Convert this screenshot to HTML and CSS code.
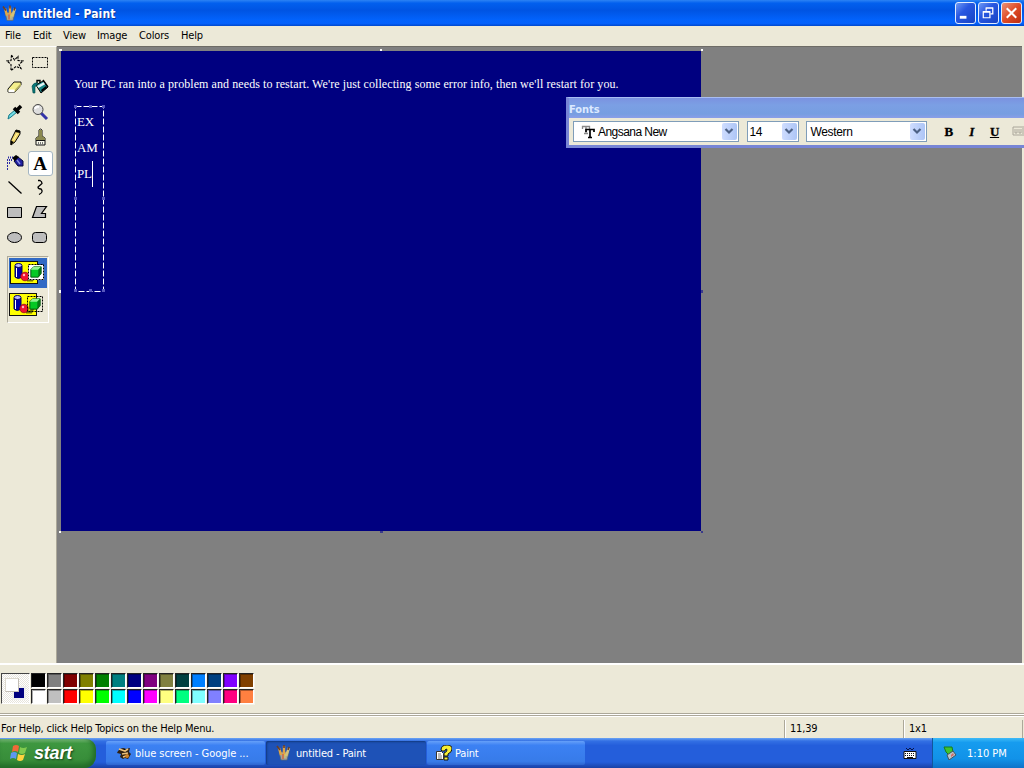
FILE: index.html
```html
<!DOCTYPE html>
<html lang="en">
<head>
<meta charset="utf-8">
<title>untitled - Paint</title>
<link rel="stylesheet" href="styles.css">
</head>
<body>
<svg width="0" height="0" class="defs" aria-hidden="true">
  <symbol id="cup" viewBox="0 0 16 16">
    <path d="M3 7h10l-2 8H5z" fill="#a4a49b" stroke="#5c6970" stroke-width=".7"/>
    <path d="M5 10L3 3M8 10V1" stroke="#e2a545" stroke-width="2.400"/>
    <path d="M10 11l3-8" stroke="#d4c27b" stroke-width="2.600"/>
    <path d="M1 1l3 4M8 0v3M13 2l-1 3" stroke="#6b3f28" stroke-width="1.600"/>
    <path d="M7 9v5" stroke="#d56a3c" stroke-width="1.500"/><path d="M9 9v4" stroke="#dfd05b"/>
  </symbol>
  <symbol id="chev" viewBox="0 0 14 16"><path d="M3.500 6l3.500 3.500L10.500 6" fill="none" stroke="#4d6185" stroke-width="2.200"/></symbol>
  <symbol id="shapes" viewBox="0 0 36 25">
    <rect x=".5" y="1.500" width="27" height="22" fill="#ffff00" stroke="#111"/>
    <path d="M5 6v11q3 3 7 0V6z" fill="#0000a8" stroke="#000060"/><ellipse cx="8.500" cy="5.500" rx="3.500" ry="2" fill="#b9b9ff" stroke="#000060"/><path d="M6.500 8v9" stroke="#fff"/>
    <path d="M17 20h5l2-4" stroke="#777700" stroke-width="3" fill="none"/>
    <circle cx="15" cy="16.500" r="4.300" fill="#f01430" stroke="#850020" stroke-width=".7"/><circle cx="14" cy="15" r="1.200" fill="#ffb8c0"/>
  </symbol>
  <symbol id="cube" viewBox="0 0 16 16"><path d="M3 6l3-3h8v7l-3 4H3z" fill="#04c924" stroke="#064d10"/><path d="M3 6l3-3h8l-3 3z" fill="#92f192"/><path d="M11 6l3-3v7l-3 4z" fill="#067814"/></symbol>
</svg>
<div class="screen">
  <header class="title">
    <svg class="cup"><use href="#cup"/></svg><span class="title-text">untitled - Paint</span>
    <div class="controls">
      <span class="ctl"><svg viewBox="0 0 20 21"><path d="M4 15h7" stroke="#fff" stroke-width="3"/></svg></span>
      <span class="ctl"><svg viewBox="0 0 20 21"><path d="M7.500 8V5.500h7v6H12M7 5h8" fill="none" stroke="#fff" stroke-width="1.300"/><path d="M4.500 9.500h7v6h-7zM4 9h8" fill="none" stroke="#fff" stroke-width="1.300"/></svg></span>
      <span class="ctl close"><svg viewBox="0 0 20 21"><path d="M5 5.500l10 10M15 5.500l-10 10" stroke="#fff" stroke-width="2.200"/></svg></span>
    </div>
  </header>
  <nav class="menu"><span>File</span><span>Edit</span><span>View</span><span>Image</span><span>Colors</span><span>Help</span></nav>
  <main class="main">
    <aside class="side">
      <div class="tools">
        <i><svg viewBox="0 0 18 18"><path d="M5.500 2l3 5 3.500-3.500 0 4 5 0.500-4 3.500 2 4-5-2-5 4 0-6-4-3.500 4-.5z" fill="none" stroke="#000" stroke-width="1.100" stroke-dasharray="2.500 1"/></svg></i>
        <i><svg viewBox="0 0 18 18"><path d="M1.500 4.500h15v10h-15z" fill="none" stroke="#000" stroke-dasharray="2 1"/></svg></i>
        <i><svg viewBox="0 0 18 18"><path d="M2 11L8 4h7v3l-6 7H2z" fill="#f4f08c" stroke="#111"/><path d="M2.500 11.500h6v2.500h-6z" fill="#fff"/><path d="M9 11.500l6-6.500v2.500L9 14z" fill="#b4b060"/></svg></i>
        <i><svg viewBox="0 0 18 18"><path d="M5 7l7-4 5 6-7 6z" fill="#178484" stroke="#000"/><path d="M6 8l7-4 1.500 2-7 4z" fill="#e3f4f4"/><path d="M6 5V2.500h3V5M12 2l5 7" stroke="#000" fill="none" stroke-width="1.400"/><path d="M1 8q2-4 6-3L4 9v6H2z" fill="#087878" stroke="#054848" stroke-width=".6"/><path d="M10 12l5-4 1 2-5 4z"/></svg></i>
        <i><svg viewBox="0 0 18 18"><path d="M2 16l1-4 6-5 2 2-6 5z" fill="#72dbe3" stroke="#147b8b"/><path d="M8 5l5 5M11 7l4-4" stroke="#000" stroke-width="3.500"/></svg></i>
        <i><svg viewBox="0 0 18 18"><path d="M10 10l6 6" stroke="#3434a8" stroke-width="3"/><circle cx="7" cy="6.500" r="5" fill="#ddd" stroke="#444"/><path d="M4 6q1-3 4-2" stroke="#fff" stroke-width="2" fill="none"/></svg></i>
        <i><svg viewBox="0 0 18 18"><path d="M5 12l5-10 4 1v3l-5 8-4 3z" fill="#f0d468" stroke="#000"/><path d="M4.500 12.500v4.500l3.500-3zM10 2l4 1v2l-5-1z"/><path d="M7.500 12l4-7" stroke="#fff9a8"/></svg></i>
        <i><svg viewBox="0 0 18 18"><path d="M8 8V2q1.500-2 3 0v6l3 2v7H5v-7z" fill="#f7f7e9" stroke="#111"/><path d="M8 8V2h3v6l3 2v2H5v-2z" fill="#8b8950"/><path d="M5 12.500h9" stroke="#111"/><path d="M7.500 14v3M9.500 14v3M11.500 14v3" stroke="#777"/></svg></i>
        <i><svg viewBox="0 0 18 18"><path d="M8 8l4-4 5 4v5l-5 0z" fill="#1f1fa0" stroke="#060639"/><path d="M6 5l4-3 3 2-4 4z"/><path d="M2 4.500h5M1 7h5M1 10h3M1 13h2M1 16h1" stroke="#2929a5" stroke-width="2" stroke-dasharray="1 1"/><path d="M11 7l3 4" stroke="#8b90e2" stroke-width="1.400"/></svg></i>
        <i class="selected"><b>A</b></i>
        <i><svg viewBox="0 0 18 18"><path d="M2.500 3.500l13 12" stroke="#000" stroke-width="1.300"/></svg></i>
        <i><svg viewBox="0 0 18 18"><path d="M7 2.500h2q2 1 2 3L7 9q0 2 3 2 3 3-2 5.500" fill="none" stroke="#000" stroke-width="1.300"/></svg></i>
        <i><svg viewBox="0 0 18 18"><path d="M1.500 4.500h14v10h-14z" fill="#bdbdbd" stroke="#000"/></svg></i>
        <i><svg viewBox="0 0 18 18"><path d="M5.500 3.500h10l-5 7h4v4h-13z" fill="#bdbdbd" stroke="#000" stroke-width="1.200"/></svg></i>
        <i><svg viewBox="0 0 18 18"><ellipse cx="8.500" cy="9.500" rx="7" ry="5" fill="#bdbdbd" stroke="#000"/></svg></i>
        <i><svg viewBox="0 0 18 18"><rect x="1.500" y="4.500" width="14" height="10" rx="3" fill="#bdbdbd" stroke="#000"/></svg></i>
      </div>
      <div class="modes">
        <div class="mode on"><svg viewBox="0 0 36 25"><use href="#shapes" width="36" height="25"/><path d="M18 5h16v15H18z" fill="#fff"/><path d="M18.500 4.500h15v15h-15z" fill="none" stroke="#000" stroke-dasharray="2 1"/><use href="#cube" x="18" y="4" width="15" height="15"/></svg></div>
        <div class="mode"><svg viewBox="0 0 36 25"><use href="#shapes" width="36" height="25"/><path d="M18.500 4.500h15v15h-15z" fill="none" stroke="#000" stroke-dasharray="2 1"/><use href="#cube" x="18" y="4" width="15" height="15"/></svg></div>
      </div>
    </aside>
    <section class="work">
      <div class="canvas">
        <p class="message">Your PC ran into a problem and needs to restart. We're just collecting some error info, then we'll restart for you.</p>
        <div class="textbox">
          <svg class="marquee" viewBox="0 0 31 187"><path d="M1.500 1.500h28v185h-28z" fill="none" stroke="#fff" stroke-dasharray="6 2"/><path d="M0 0h3v3H0zM15 0h3v3h-3zM28 0h3v3h-3zM0 92h3v3H0zM28 92h3v3h-3zM0 184h3v3H0zM15 184h3v3h-3zM28 184h3v3h-3z" fill="#5555bd"/></svg>
          <div>EX</div><div>AM</div><div>PL<span class="caret"></span></div>
        </div>
        <svg class="handles" viewBox="0 0 644 484"><path d="M0 0h3v2H0zM321 0h2v2h-2zM642 0h2v2h-2zM0 241h2v3H0zM0 482h2v2H0z" fill="#fff"/><path d="M642 241h2v3h-2zM321 482h3v2h-3zM642 482h2v2h-2z" fill="#3a3a8b"/></svg>
      </div>
      <div class="fonts">
        <div class="fonts-title">Fonts</div>
        <div class="fonts-body">
          <div class="combo face"><svg class="tt" viewBox="0 0 14 14"><path d="M1.500 4V1.500h7V4M5 1v7M3 8.500h4" fill="none" stroke="#888" stroke-width="1.300"/><path d="M5 7V4.500h8V7M9 4v8M7 12.500h4" fill="none" stroke="#000" stroke-width="1.700"/></svg><span>Angsana New</span><em><svg><use href="#chev"/></svg></em></div>
          <div class="combo size"><span>14</span><em><svg><use href="#chev"/></svg></em></div>
          <div class="combo script"><span>Western</span><em><svg><use href="#chev"/></svg></em></div>
          <b class="fmt">B</b><b class="fmt it">I</b><b class="fmt un">U</b>
          <svg class="vert" viewBox="0 0 12 11"><path d="M12 1H1v8h11M3 3v4h2V3M7 3v4h2V3M11 2v6" fill="none" stroke="#aaa69a"/></svg>
        </div>
      </div>
    </section>
  </main>
  <section class="palette">
    <div class="current"><span class="back"></span><span class="fore"></span></div>
    <div class="swatches">
      <i class="c1"></i><i class="c2"></i><i class="c3"></i><i class="c4"></i><i class="c5"></i><i class="c6"></i><i class="c7"></i><i class="c8"></i><i class="c9"></i><i class="c10"></i><i class="c11"></i><i class="c12"></i><i class="c13"></i><i class="c14"></i>
      <i class="d1"></i><i class="d2"></i><i class="d3"></i><i class="d4"></i><i class="d5"></i><i class="d6"></i><i class="d7"></i><i class="d8"></i><i class="d9"></i><i class="d10"></i><i class="d11"></i><i class="d12"></i><i class="d13"></i><i class="d14"></i>
    </div>
  </section>
  <footer class="status"><span class="help">For Help, click Help Topics on the Help Menu.</span><span class="pos">11,39</span><span class="dim">1x1</span></footer>
  <div class="taskbar">
    <div class="start"><svg viewBox="0 0 20 20"><path d="M4 3q3-2 6 0L9 9q-3-2-6 0z" fill="#f16938"/><path d="M11 4q3 2 7 0l-2 6q-3 2-6 0z" fill="#81ca4e"/><path d="M2 10q3-2 6 0l-1 6q-3-2-6 0z" fill="#5d98f1"/><path d="M9 11q4 2 7 0l-2 6q-3 2-6 0z" fill="#ffd33e"/></svg><span>start</span></div>
    <div class="task t1"><svg viewBox="0 0 16 16"><path d="M2 6q4-5 8-2l4-1-1 4 2 2-3 5-3-1-2 1-3-2 1-3-4-1z" fill="#302111"/><path d="M3 4l6 2 3-2M6 9l6-1M7 12l3-1" stroke="#edc078" stroke-width="1.700"/><circle cx="11" cy="11" r="2" fill="#cf842b"/></svg><span>blue screen - Google ...</span></div>
    <div class="task t2 active"><svg><use href="#cup"/></svg><span>untitled - Paint</span></div>
    <div class="task t3"><svg viewBox="0 0 16 16"><path d="M5 5q0-5 6-5 5 0 5 4 0 3-4 5v2H8V8q3-1 3-3T9 5v1H6zM8 12h4v3H8z" fill="#f8ef32" stroke="#111"/><path d="M.5 6.500h5l2 2v6h-7z" fill="#fff" stroke="#333"/><path d="M2 9h3M2 11h4M2 13h4" stroke="#777"/></svg><span>Paint</span></div>
    <svg class="keyboard" viewBox="0 0 14 12"><path d="M3 1l2 2 2-2 2 2 2-2" fill="none" stroke="#071447"/><path d="M1 4.500h12v7H1z" fill="#fff" stroke="#111"/><path d="M2 6.500h10M2 8.500h10" stroke="#111" stroke-dasharray="1 1"/><path d="M4 10.500h6" stroke="#111"/></svg>
    <div class="tray"><svg viewBox="0 0 14 14"><path d="M1 1h8l1 5-4 3-3-3z" fill="#3fc42e" stroke="#177b22"/><path d="M4 9l6-4 3 4-7 5z" fill="#b9c6cb" stroke="#44545e"/><path d="M8 9l2-2 1 2-3 2z" fill="#d46967"/></svg><span>1:10 PM</span></div>
  </div>
</div>
</body>
</html>
```

FILE: styles.css
```css
* { box-sizing: border-box; }
body { margin: 0; font: 11px/14px "DejaVu Sans Condensed", "DejaVu Sans", sans-serif; font-stretch: condensed; letter-spacing: -.2px; color: #000; }
svg { display: block; flex: none; }
i { font-style: normal; }
.defs { display: none; }
.screen { width: 1024px; height: 768px; display: flex; flex-direction: column; overflow: hidden; background: #ece9d8; white-space: nowrap; }
.title { height: 26px; flex: none; display: flex; align-items: center; padding: 0 2px; background: linear-gradient(#2c83f4, #0260ee 12%, #0054e3 40%, #0262fb 75%, #0461fc 90%, #0048cc); color: #fff; }
.cup { width: 16px; height: 17px; }
.title-text { margin: 1px 0 0 4px; font: bold 12px/18px "DejaVu Sans Condensed", sans-serif; letter-spacing: .12px; text-shadow: 1px 1px #103a98; }
.controls { margin-left: auto; display: flex; gap: 2px; }
.ctl { width: 21px; height: 22px; border: 1px solid #e2edff; border-radius: 3px; background: linear-gradient(135deg, #6f9af5, #2857e1 40%, #1743c3); }
.ctl svg { width: 19px; height: 20px; }
.close { background: linear-gradient(135deg, #ed9277, #df4c27 50%, #bc2d10); }
.menu { height: 20px; flex: none; display: grid; grid-template-columns: 28px 30px 34px 42px 42px 40px; padding: 2px 0 0 5px; line-height: 15px; letter-spacing: -.15px; }
.main { height: 618px; flex: none; display: flex; }
.side { width: 57px; flex: none; padding: 3px 0 0 2px; border-top: 1px solid #fff; border-right: 1px solid #aca899; }
.tools { display: grid; grid-template-columns: 25px 25px; grid-auto-rows: 25px; }
.tools i { display: flex; align-items: center; justify-content: center; }
.tools svg { width: 18px; height: 18px; margin-top: -1px; }
.tools .selected { background: #fff; border: 1px solid #a3b5c2; border-radius: 3px; margin: 1px -1px -1px 1px; }
.selected b { font: bold 19px/22px "Liberation Serif", serif; letter-spacing: 0; margin-left: -1px; }
.modes { width: 42px; height: 67px; margin: 6px 0 0 5px; padding: 1px; border: 1px solid; border-color: #aca899 #fff #fff #aca899; }
.mode { height: 31px; padding: 4px 0 0 0; }
.mode.on { height: 30px; padding: 2px 0 0 1px; background: #316ac5; }
.mode svg { width: 36px; height: 25px; }
.work { position: relative; width: 965px; height: 617px; padding: 4px 0 0 4px; background: #808080; border-top: 1px solid #6e6c66; }
.canvas { position: relative; width: 640px; height: 480px; background: #000080; color: #fff; padding: 26px 0 0 13px; font: 12px/14px "Liberation Serif", serif; letter-spacing: .08px; }
.message { margin: 0; }
.handles { position: absolute; left: -2px; top: -2px; width: 644px; height: 484px; }
.textbox { position: relative; width: 31px; height: 187px; margin-top: 14px; padding: 4px 0 0 3px; line-height: 26px; letter-spacing: -.2px; font-size: 13px; }
.marquee { position: absolute; left: 0; top: 0; width: 31px; height: 187px; }
.caret { display: inline-block; vertical-align: middle; width: 1px; height: 26px; background: #fff; margin: -3px 0 0 0; }
.textbox > div { height: 26px; }
.fonts { position: absolute; left: 509px; top: 50px; width: 458px; height: 51px; border: 3px solid #7785d5; border-top: 1px solid #a8bdf2; border-right: 0; background: #ece9d8; }
.fonts-title { height: 20px; padding-top: 4px; background: linear-gradient(#7b92e0, #7b9fe4 35%, #779ee1 80%, #8a9ee8); color: #dce9ff; font: bold 11px/15px "DejaVu Sans Condensed", sans-serif; letter-spacing: -.05px; }
.fonts-body { height: 27px; display: flex; align-items: center; padding-left: 4px; }
.combo { height: 21px; display: flex; align-items: center; border: 1px solid #7f9db9; background: #fff; font: 12px/16px "Liberation Sans", sans-serif; letter-spacing: -.55px; padding-left: 3px; }
.combo em { width: 15px; height: 17px; margin: 0 1px 0 auto; border-radius: 2px; background: linear-gradient(90deg, #cfddff, #adc5f6); }
.combo em svg { width: 14px; height: 16px; }
.face { width: 166px; padding-left: 7px; margin-right: 8px; }
.size { width: 53px; margin-right: 7px; padding-left: 2px; }
.script { width: 121px; margin-right: 10px; letter-spacing: -.35px; }
.tt { width: 14px; height: 14px; margin-right: 3px; }
.fmt { width: 23px; text-align: center; font: bold 13px/16px "Liberation Serif", serif; -webkit-text-stroke: .3px #000; }
.it { font-style: italic; }
.un { text-decoration: underline; }
.vert { width: 12px; height: 11px; margin-left: 6px; }
.palette { height: 52px; flex: none; display: flex; align-items: flex-start; padding: 7px 0 0 1px; border-top: 2px solid #fff; margin-top: -1px; }
.current { position: relative; width: 29px; height: 31px; border: 1px solid; border-color: #444 #fff #fff #444; background: repeating-conic-gradient(#fff 0 25%, #e7e4dc 0 50%) 0 0 / 2px 2px; margin-top: 1px; }
.back, .fore { position: absolute; width: 14px; height: 14px; border: 1px solid #ddd9ce; }
.back { left: 10px; top: 12px; background: #000080; border: 2px solid #eee; }
.fore { left: 3px; top: 4px; background: #fff; border-right-color: #c3bdb5; border-bottom-color: #c3bdb5; }
.swatches { display: grid; grid-template-columns: repeat(14, 16px); grid-auto-rows: 16px; margin-left: 1px; padding-top: 1px; }
.swatches i { margin: 0 1px 1px 0; border: 1px solid; border-color: #222 #fff #fff #222; box-shadow: 1px 1px #f5f3ea, inset 1px 1px #0005; }
.c1{background:#000}.c2{background:#808080}.c3{background:#800000}.c4{background:#808000}.c5{background:#008000}.c6{background:#008080}.c7{background:#000080}.c8{background:#800080}.c9{background:#808040}.c10{background:#004040}.c11{background:#0080ff}.c12{background:#004080}.c13{background:#8000ff}.c14{background:#804000}
.d1{background:#fff}.d2{background:#c0c0c0}.d3{background:#f00}.d4{background:#ff0}.d5{background:#0f0}.d6{background:#0ff}.d7{background:#00f}.d8{background:#f0f}.d9{background:#ffff80}.d10{background:#00ff80}.d11{background:#80ffff}.d12{background:#8080ff}.d13{background:#ff0080}.d14{background:#ff8040}
.status { height: 23px; flex: none; display: flex; border-top: 1px solid #aca899; padding-top: 4px; line-height: 17px; box-shadow: inset 0 1px #fff, 0 -1px #fff, 0 -2px #aca899; }
.help { width: 784px; padding-left: 1px; }
.pos { width: 119px; padding-left: 5px; border-left: 1px solid #aca899; box-shadow: inset 1px 0 #fff; }
.dim { width: 120px; padding-left: 5px; border-left: 1px solid #aca899; border-right: 1px solid #aca899; box-shadow: inset 1px 0 #fff; }
.taskbar { height: 30px; flex: none; display: flex; align-items: center; background: linear-gradient(#6ba4f4, #3370e4 10%, #245edb 25%, #245edb 80%, #1941a5); color: #fff; }
.start { width: 96px; height: 29px; margin-right: 10px; padding: 0 0 1px 9px; display: flex; align-items: center; border-radius: 0 10px 12px 0; background: linear-gradient(#79b979, #3e9740 15%, #388e3a 70%, #25752b); box-shadow: inset -3px -2px 5px #226b28; }
.start svg { width: 20px; height: 20px; }
.start span { margin-left: 5px; font: italic bold 18px/22px "Liberation Sans", sans-serif; letter-spacing: -.2px; text-shadow: 1px 1px 2px #143f19; }
.task { width: 159px; height: 24px; margin-right: 1px; padding-left: 10px; display: flex; align-items: center; gap: 3px; border-radius: 2px; background: linear-gradient(#66a0f9, #3c81f3 18%, #377be9 85%, #2d65cf); }
.task svg { width: 16px; height: 16px; }
.task span { margin-top: 1px; }
.t1 { letter-spacing: -.05px; }
.t2 { width: 160px; letter-spacing: -.15px; }
.t2 span { margin: 2px 0 0 1px; }
.t3 { width: 158px; padding-left: 9px; }
.active { background: #1e52b7; box-shadow: inset 1px 1px 2px #12397d; }
.keyboard { width: 14px; height: 12px; margin: 0 0 0 317px; }
.tray { width: 92px; height: 30px; margin-left: auto; display: flex; align-items: center; padding-left: 10px; border-left: 1px solid #12569c; background: linear-gradient(#3ebaf6, #169cef 15%, #1192e8 70%, #0e72c8); }
.tray svg { width: 14px; height: 14px; }
.tray span { margin: 1px 0 0 10px; letter-spacing: 0; }
```
